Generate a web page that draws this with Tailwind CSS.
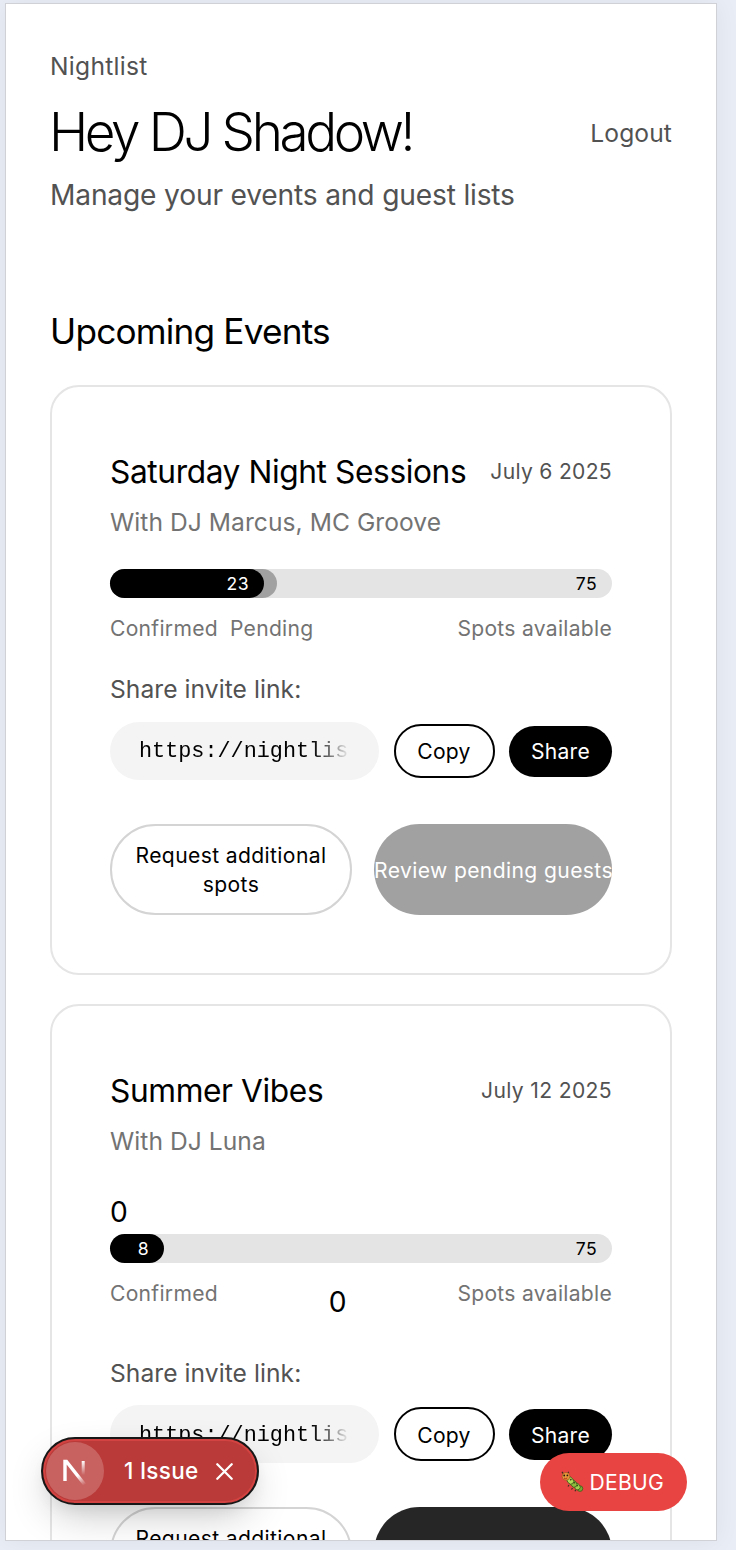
<!DOCTYPE html>
<html lang="en">
<head>
<meta charset="utf-8">
<title>Nightlist</title>
<script src="https://cdn.jsdelivr.net/npm/@tailwindcss/browser@4"></script>
</head>
<body class="bg-[#e9edf6] font-[Inter,sans-serif] text-black">
<div class="h-[1550px] w-[736px] overflow-hidden pl-[5px] pt-[3px]">
<div class="relative h-[1538px] w-[712px] border border-[#d0d1d6] bg-white shadow-[0_0_24px_rgba(0,0,0,0.06)]">
<div class="h-[1536px] overflow-hidden px-[44px] pt-[44px]">

  <header class="flex items-center justify-between">
    <div class="whitespace-nowrap">
      <p class="text-[24.6px] leading-[36px] tracking-[0.27px] text-[#525252]">Nightlist</p>
      <h1 class="-ml-px mt-[15px] text-[53px] font-light leading-[66px] tracking-[-3.4px]">Hey DJ Shadow!</h1>
      <p class="mt-[8px] text-[28.2px] leading-[44px] tracking-[-0.19px] text-[#525252]">Manage your events and guest lists</p>
    </div>
    <button class="text-[24.6px] leading-[36px] tracking-[0.1px] text-[#525252]">Logout</button>
  </header>

  <h2 class="mt-[89px] text-[35.2px] leading-[51px] tracking-[-0.8px]">Upcoming Events</h2>

  <article class="mt-[28px] rounded-[29px] border-2 border-[#e5e5e5] p-[58px]">
    <div class="flex h-[53px] items-center justify-between whitespace-nowrap">
      <h3 class="text-[31.7px] tracking-[-0.4px]">Saturday Night Sessions</h3>
      <span class="text-[21.1px] tracking-[0.3px] text-[#525252]">July 6 2025</span>
    </div>
    <p class="mt-[6px] text-[24.6px] leading-[36px] tracking-[0.05px] text-[#737373]">With DJ Marcus, MC Groove</p>
    <div class="mt-[29px] flex h-[29px] items-center rounded-full bg-[#e4e4e4] text-[17.6px] leading-[29px] tracking-[0.4px]">
      <div class="w-[167px] rounded-full bg-[#a1a1a1]"><div class="w-[154px] rounded-full bg-black pr-[15px] text-right text-white">23</div></div>
      <span class="ml-auto pr-[15px]">75</span>
    </div>
    <div class="mt-[16px] flex gap-[12px] text-[21.1px] leading-[29px] tracking-[0.28px] text-[#737373]">
      <span>Confirmed</span><span>Pending</span><span class="ml-auto">Spots available</span>
    </div>
    <p class="mt-[28px] text-[24.6px] leading-[37px] tracking-[0.06px] text-[#525252]">Share invite link:</p>
    <div class="mt-[14px] flex h-[58px] items-center gap-[14.5px] text-[21.1px] tracking-[0.25px]">
      <div class="h-[58px] w-[269px] shrink-0 rounded-full bg-[#f4f4f4] px-[29px]">
        <div class="overflow-hidden whitespace-nowrap font-['Liberation_Mono',monospace] text-[21.8px] leading-[59px] tracking-normal [mask-image:linear-gradient(to_right,black_82%,transparent)]">https://nightlist</div>
      </div>
      <button class="h-[54px] w-[101px] shrink-0 rounded-full border-2 border-black pt-[2px]">Copy</button>
      <button class="h-[51px] w-[103px] shrink-0 rounded-full bg-black pt-[2px] text-white">Share</button>
    </div>
    <div class="mt-[44px] flex h-[91px] gap-[22px] whitespace-nowrap text-[21.1px] leading-[29px] tracking-[0.38px]">
      <button class="w-[242px] rounded-full border-2 border-[#d4d4d4]">Request additional<br>spots</button>
      <button class="w-[238px] rounded-full bg-[#a1a1a1] pt-[2px] text-white">Review pending guests</button>
    </div>
  </article>

  <article class="mt-[29px] h-[620px] rounded-[29px] border-2 border-[#e5e5e5] p-[58px]">
    <div class="flex h-[53px] items-center justify-between whitespace-nowrap">
      <h3 class="text-[31.7px] tracking-[-0.4px]">Summer Vibes</h3>
      <span class="text-[21.1px] tracking-[0.35px] text-[#525252]">July 12 2025</span>
    </div>
    <p class="mt-[6px] text-[24.6px] leading-[36px] tracking-[0.05px] text-[#737373]">With DJ Luna</p>
    <p class="mt-[31px] text-[28.2px] leading-[44px]">0</p>
    <div class="flex h-[29px] items-center rounded-full bg-[#e4e4e4] text-[17.6px] leading-[29px] tracking-[0.4px]">
      <div class="w-[54px] rounded-full bg-black pr-[15px] text-right text-white">8</div>
      <span class="ml-auto pr-[15px]">75</span>
    </div>
    <div class="mt-[16px] flex h-[45px] justify-between text-[21.1px] leading-[29px] tracking-[0.28px] text-[#737373]">
      <span>Confirmed</span><span class="text-[28.2px] leading-[47px] text-black">0</span><span>Spots available</span>
    </div>
    <p class="mt-[31px] text-[24.6px] leading-[37px] tracking-[0.06px] text-[#525252]">Share invite link:</p>
    <div class="mt-[13px] flex h-[58px] items-center gap-[14.5px] text-[21.1px] tracking-[0.25px]">
      <div class="h-[58px] w-[269px] shrink-0 rounded-full bg-[#f4f4f4] px-[29px]">
        <div class="overflow-hidden whitespace-nowrap font-['Liberation_Mono',monospace] text-[21.8px] leading-[61px] tracking-normal [mask-image:linear-gradient(to_right,black_82%,transparent)]">https://nightlist</div>
      </div>
      <button class="h-[54px] w-[101px] shrink-0 rounded-full border-2 border-black pt-[3px]">Copy</button>
      <button class="h-[51px] w-[103px] shrink-0 rounded-full bg-black pt-[3px] text-white">Share</button>
    </div>
    <div class="mt-[44px] flex h-[91px] gap-[22px] whitespace-nowrap text-[21.1px] leading-[29px] tracking-[0.38px]">
      <button class="w-[242px] rounded-full border-2 border-[#d4d4d4]">Request additional<br>spots</button>
      <div class="w-[238px] rounded-full bg-[#262626]"></div>
    </div>
  </article>
</div>

<!-- Floating developer badges -->
<div class="absolute inset-0 overflow-hidden">
  <div class="absolute left-[35px] top-[1433px] flex h-[68px] w-[218px] items-center rounded-full border-2 border-[#171717] bg-[#b93a38] pl-[3px] text-white shadow-[inset_0_0_0_2px_#d24341,0_16px_40px_-8px_rgba(0,0,0,0.24),0_8px_16px_-4px_rgba(0,0,0,0.06)]">
    <div class="flex size-[58px] items-center justify-center rounded-full bg-[#c86261]">
      <svg width="58" height="58" viewBox="0 0 58 58" fill="none">
        <defs>
          <linearGradient id="diag" x1="34" y1="32" x2="40" y2="42" gradientUnits="userSpaceOnUse"><stop stop-color="#fff"/><stop offset="1" stop-color="#fff" stop-opacity="0"/></linearGradient>
          <linearGradient id="stem" x1="37" y1="19" x2="37" y2="33" gradientUnits="userSpaceOnUse"><stop stop-color="#fff"/><stop offset="1" stop-color="#fff" stop-opacity="0"/></linearGradient>
        </defs>
        <path d="M19 39V19.5h1.4L39 43" stroke="url(#diag)" stroke-width="3.4"/>
        <path d="M37.2 19v14" stroke="url(#stem)" stroke-width="3"/>
      </svg>
    </div>
    <span class="ml-[20px] text-[22.5px] font-medium tracking-[0.3px]">1 Issue</span>
    <svg class="ml-[17px]" width="17" height="17" viewBox="0 0 17 17" stroke="#fff" stroke-width="2.3" stroke-linecap="round"><path d="M1.3 1.3l14.4 14.4M15.7 1.3L1.3 15.7"/></svg>
  </div>

  <div class="absolute left-[533.5px] top-[1449px] flex h-[58px] w-[147px] items-center rounded-full bg-[#e84441] pl-[21px] text-[21.1px] tracking-[0.3px] text-white">
    <svg width="23" height="22" viewBox="0 0 23 22">
      <g stroke="#43581c" stroke-width=".8">
        <circle cx="19" cy="17.6" r="2.8" fill="#79a832"/>
        <ellipse cx="16" cy="15.5" rx="2.9" ry="3.6" fill="#a2cf4d" transform="rotate(-38 16 15.5)"/>
        <ellipse cx="12.6" cy="12.7" rx="2.9" ry="3.9" fill="#8abb3c" transform="rotate(-38 12.6 12.7)"/>
        <ellipse cx="9.2" cy="9.5" rx="3" ry="4" fill="#b4d957" transform="rotate(-38 9.2 9.5)"/>
      </g>
      <path d="M2.2 2.7L1 .9M6.8 2.2L7.8.8M8 14l-1 1.5m4.5 1.5-1 1.5m4.2.3-.7 1.4" stroke="#3c3020" stroke-width="1.2"/>
      <circle cx="5" cy="5.3" r="3.9" fill="#e6993b" stroke="#9a4a1b" stroke-width=".6"/>
      <circle cx="3.2" cy="4.5" r=".9" fill="#2b1a10"/><circle cx="6.4" cy="4.4" r=".9" fill="#2b1a10"/>
      <path d="M3 7.1q1.7 1.3 3.3-.2" fill="none" stroke="#b52f20" stroke-width="1"/>
      <path d="M9.3 8.1l1 1M12.7 11.2l1 1M16 14.2l.8.8" stroke="#35471a" stroke-width="1.6"/>
    </svg>
    <span class="ml-[6px] pt-[2px]">DEBUG</span>
  </div>
</div>
</div>
</div>
</body>
</html>
